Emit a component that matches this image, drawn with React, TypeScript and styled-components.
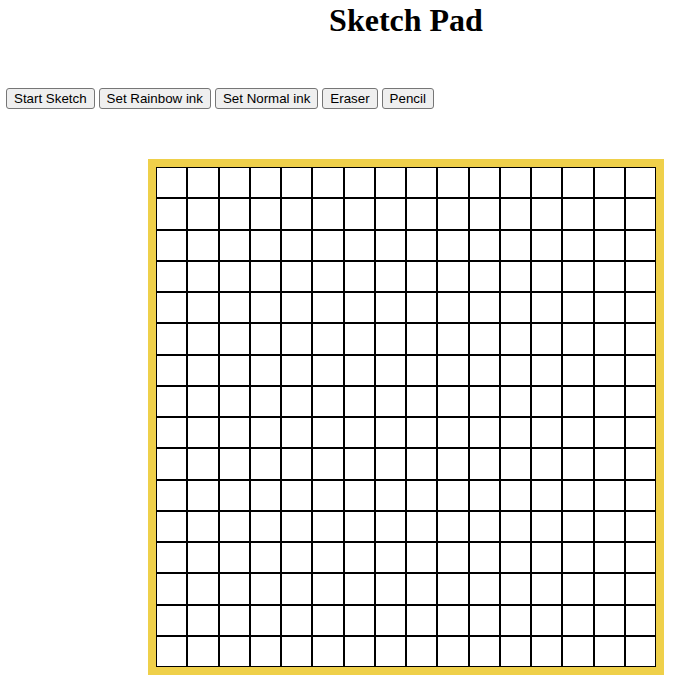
import React from "react";
import styled, { createGlobalStyle } from "styled-components";

const GlobalStyle = createGlobalStyle`
  html, body {
    margin: 0;
    padding: 0;
    background: #ffffff;
  }
  body {
    font-family: "Liberation Serif", "Times New Roman", serif;
  }
`;

const Page = styled.div`
  display: flex;
  flex-direction: column;
  align-items: flex-start;
`;

const Title = styled.h1`
  margin: 2px 0 0 148px;
  width: 516px;
  text-align: center;
  font-family: "Liberation Serif", "Times New Roman", serif;
  font-size: 32px;
  font-weight: bold;
  line-height: 37px;
  color: #000;
`;

const Toolbar = styled.div`
  display: flex;
  gap: 4px;
  margin: 49px 0 0 6px;
`;

const ToolButton = styled.button`
  font-family: "Liberation Sans", Arial, sans-serif;
  font-size: 13.333px;
  height: 21px;
  padding: 0 7px;
  border: 1px solid #767676;
  border-radius: 3px;
  background: #efefef;
  color: #000;
  cursor: pointer;
  line-height: 19px;
`;

const Board = styled.div`
  margin: 50px 0 0 148px;
  border: 8px solid #efd04a;
  width: 500px;
  height: 500px;
  display: grid;
  grid-template-columns: repeat(16, 1fr);
  grid-template-rows: repeat(16, 1fr);
  background: #fff;
`;

const Cell = styled.div`
  box-sizing: border-box;
  border: 1px solid #000;
  background: #fff;
`;

const buttons = ["Start Sketch", "Set Rainbow ink", "Set Normal ink", "Eraser", "Pencil"];

export default function App() {
  return (
    <Page>
      <GlobalStyle />
      <Title>Sketch Pad</Title>
      <Toolbar>
        {buttons.map((b) => (
          <ToolButton key={b}>{b}</ToolButton>
        ))}
      </Toolbar>
      <Board>
        {Array.from({ length: 256 }, (_, i) => (
          <Cell key={i} />
        ))}
      </Board>
    </Page>
  );
}
